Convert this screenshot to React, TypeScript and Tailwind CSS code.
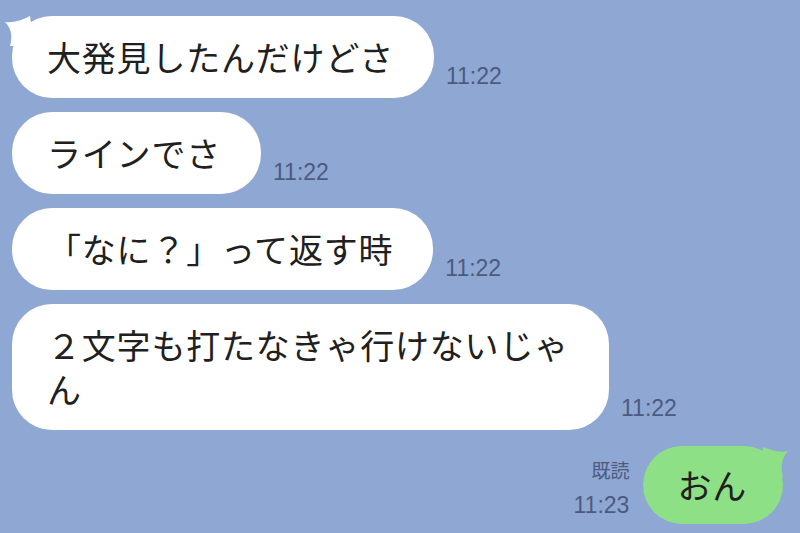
import React from "react";

const jp = { fontFamily: '"Noto Sans CJK JP", "Noto Sans", sans-serif' };
const num = { fontFamily: '"Liberation Sans", Arial, sans-serif' };

const messages = [
  { text: "大発見したんだけどさ", time: "11:22", tail: true },
  { text: "ラインでさ", time: "11:22", tail: false },
  { text: "「なに？」って返す時", time: "11:22", tail: false },
  { text: "２文字も打たなきゃ行けないじゃ\nん", time: "11:22", tail: false },
];

const Received = ({ text, time, tail }: { text: string; time: string; tail: boolean }) => (
  <div className="flex items-end gap-[12px]">
    <div className="relative">
      {tail && (
        <svg className="absolute left-[-8px] top-[0px]" width="40" height="40" viewBox="0 0 40 40">
          <path d="M1 6 C10 7 18 4 26 0 L30 30 L6 30 C9 20 7 12 1 6 Z" fill="#ffffff" />
        </svg>
      )}
      <div
        className="relative bg-white text-[#202020] text-[34px] leading-[44px] rounded-[40px] pl-[35px] pr-[40px] py-[19px] whitespace-pre-line tracking-[0.8px]"
        style={jp}
      >
        {text}
      </div>
    </div>
    <div className="text-[23px] leading-[28px] text-[#4b5b80] mb-[8px]" style={num}>
      {time}
    </div>
  </div>
);

export default function App() {
  return (
    <div className="w-[800px] h-[533px] bg-[#8fa7d3] overflow-hidden flex flex-col pl-[12px] pt-[16px]">
      <div className="flex flex-col gap-[14px]">
        {messages.map((m, i) => (
          <Received key={i} text={m.text} time={m.time} tail={m.tail} />
        ))}
      </div>
      <div className="flex justify-end items-end gap-[14px] mt-[16px] pr-[17px]">
        <div className="flex flex-col items-end text-[#4b5b80] mb-[4px]">
          <span className="text-[19px] leading-[26px] mb-[7px]" style={jp}>既読</span>
          <span className="text-[23px] leading-[30px]" style={num}>11:23</span>
        </div>
        <div className="relative">
          <svg className="absolute right-[-6px] top-[1px]" width="40" height="40" viewBox="0 0 40 40">
            <path d="M39 4 C30 6 22 3 14 0 L10 30 L34 30 C31 20 33 10 39 4 Z" fill="#8de086" />
          </svg>
          <div
            className="relative bg-[#8de086] text-[#202020] text-[34px] leading-[44px] rounded-[40px] pl-[34px] pr-[36px] py-[17px] tracking-[0.8px]"
            style={jp}
          >
            おん
          </div>
        </div>
      </div>
    </div>
  );
}
